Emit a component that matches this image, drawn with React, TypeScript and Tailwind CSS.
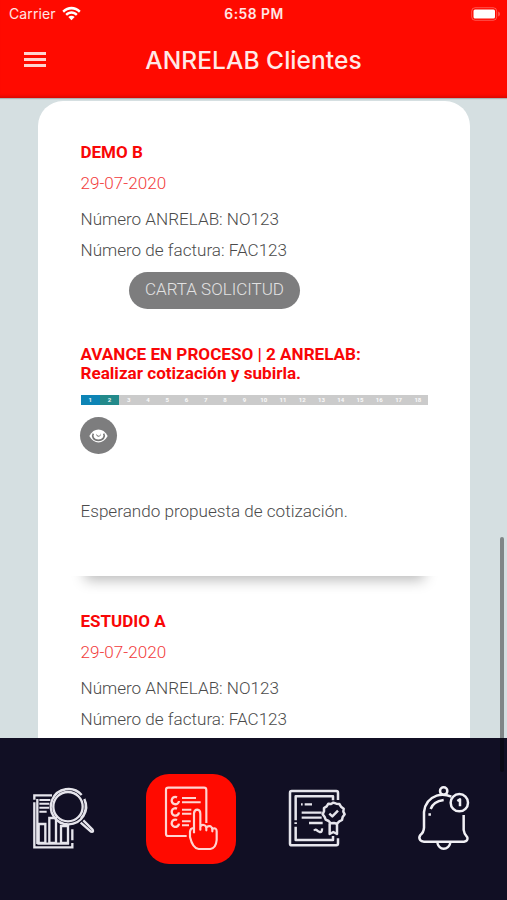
import type { ReactNode } from 'react';

const steps = Array.from({ length: 18 }, (_, i) => i + 1);

function StatusBar() {
  return (
    <div className="grid h-7 grid-cols-[1fr_auto_1fr] items-center pl-[9px] pr-[8px] leading-none text-white/90">
      <div className="flex items-center gap-[6px]">
        <span className="text-[14px] tracking-[0.1px]">Carrier</span>
        <svg width="19" height="15" viewBox="0 0 57 45" className="-mt-[2px]">
          <path d="M1 14C17-2 40-2 56 14L51 20C38 7 19 7 6 20Z" fill="white" />
          <path d="M10 24C21 13 36 13 47 24L42 29C34 21 23 21 15 29Z" fill="white" />
          <path d="M19 33C25 28 32 28 38 33L28.500 43Z" fill="white" />
        </svg>
      </div>
      <span className="pt-px text-center text-[13.800px] font-semibold tracking-[0.500px]">6:58 PM</span>
      <svg className="-mr-[2px] -mt-[1px] justify-self-end" width="30" height="14" viewBox="0 0 30 14">
        <rect x="0.700" y="0.700" width="25" height="12.600" rx="3.500" fill="none" stroke="white" strokeOpacity="0.300" />
        <rect x="2.500" y="2.500" width="21.500" height="9" rx="1.500" fill="white" />
        <path d="M27.300 4.500c2 .7 2 4.300 0 5z" fill="white" fillOpacity="0.400" />
      </svg>
    </div>
  );
}

function Header() {
  return (
    <header className="relative z-10 h-[98px] shrink-0 bg-[#ff0a00] font-['Inter',sans-serif] shadow-[inset_0_-4px_3px_-2px_rgba(120,0,0,0.25),0_1px_1px_rgba(0,0,0,0.2)]">
      <StatusBar />
      <div className="grid h-[63px] grid-cols-[70px_1fr_70px] items-center">
        <div className="ml-6 flex w-[22px] flex-col gap-[3.500px]">
          <span className="h-[2.500px] bg-[#ffd4d0]" />
          <span className="h-[2.500px] bg-[#ffd4d0]" />
          <span className="h-[2.500px] bg-[#ffd4d0]" />
        </div>
        <h1 className="whitespace-nowrap pt-px text-center text-[24.500px] font-medium leading-none tracking-[0.050px] text-[#ffe9e7]">ANRELAB Clientes</h1>
      </div>
    </header>
  );
}

function Record({ name }: { name: string }) {
  return (
    <div className="text-[17.100px] font-light text-[#4b4b4b]">
      <h2 className="-mt-px text-[17px] font-bold leading-[20px] text-[#f90606]">{name}</h2>
      <p className="mt-[11px] leading-[20px] text-[#f23b3b]">29-07-2020</p>
      <p className="mt-[16px] leading-[20px]">Número ANRELAB: NO123</p>
      <p className="mt-[11px] leading-[20px]">Número de factura: FAC123</p>
    </div>
  );
}

function Progress() {
  return (
    <div className="mt-[13px] grid h-[10px] w-[347px] grid-cols-[repeat(18,1fr)] bg-[#cbcbcb] text-center text-[6px] font-bold leading-[10px] text-white/90">
      {steps.map((n) => (
        <span key={n} className={n === 1 ? 'bg-[#0d84b5]' : n === 2 ? 'bg-[#238a8b]' : ''}>{n}</span>
      ))}
    </div>
  );
}

function Eye() {
  return (
    <svg width="19" height="16" viewBox="0 0 57 48">
      <path d="M1 24C14-2 43-2 56 24C43 50 14 50 1 24Z" fill="white" />
      <path d="M13 17C8 25 13 37 28 37C43 37 49 25 44 17" fill="none" stroke="#777" strokeWidth="5" />
      <path d="M22 17a7 7 0 1 0 13-1c0 5-2 7-5 7s-6-2-8-6z" fill="#777" />
    </svg>
  );
}

function Tab({ children }: { children: ReactNode }) {
  return <div className="flex h-[92px] shrink-0 items-center">{children}</div>;
}

function ReportIcon() {
  return (
    <svg width="90" height="100" viewBox="0 0 270 300" fill="none" stroke="#e6e5ec" strokeWidth="7">
      <path d="M96 76H43V89M43 97V232H157V219M157 211V178M52 87V222" />
      <path d="M58 90H91M58 101H88M58 113H87M58 125H80" strokeWidth="6" />
      <path d="M56 219V162H76V219ZM88 219V144H108V219ZM123 219V168H144V219ZM52 221H147" strokeWidth="7" />
      <circle cx="144" cy="110" r="44" strokeWidth="7" />
      <path d="M185 75A53 53 0 1 0 193 87A53 53 0 0 1 183 145" />
      <path d="M190 151L218 179Q222 187 213 185L182 158" strokeWidth="7" />
    </svg>
  );
}

function TasksIcon() {
  return (
    <svg className="shrink-0" width="105" height="105" viewBox="0 0 315 315" fill="none" stroke="#ffd4d1" strokeWidth="6.500" strokeLinejoin="round">
      <path d="M140 213H84Q78 213 78 206V74Q78 68 85 68H192Q199 68 199 75V174" />
      <path d="M111 97A11 11 0 1 0 117 108M111 131A11 11 0 1 0 117 142M111 165A11 11 0 1 0 117 176" strokeWidth="7" />
      <path d="M126 99H168M126 112H182M126 134H154M126 146H154M126 169H152M126 181H147" strokeWidth="6" />
      <path d="M162 205V145Q163 134 172 134Q181 135 181 146V194V185Q184 179 191 180Q198 181 199 189V196V188Q204 181 212 184Q217 187 217 194V199V191Q230 187 230 199V225Q228 249 211 252H176Q158 250 150 216V200Q151 190 160 189" />
    </svg>
  );
}

function CertificateIcon() {
  return (
    <svg width="90" height="100" viewBox="0 0 270 300" fill="none" stroke="#e6e5ec" strokeWidth="7.500" strokeLinejoin="round">
      <path d="M189 90V68Q189 63 184 63H50Q45 63 45 69V221Q45 226 51 226H184Q189 226 189 220V205" />
      <path d="M174 91V79H62V151M62 157V162M62 170V210H174V198" />
      <path d="M78 103H83M89 103H111M80 128H140M80 143H140M102 159H143" strokeWidth="7" />
      <path d="M117 182Q122 175 128 183L134 186Q142 188 141 175" strokeWidth="7" />
      <path d="M175 98L184 101L193 102L198 110L206 116L205 125L209 133L203 141L201 150L193 154L186 161L177 159L167 160L161 153L152 149L149 141L143 133L147 124L147 114L155 109L160 101L168 102Z" />
      <path d="M163 131L172 139L189 122" />
      <path d="M164 160V192L175 186L186 192V160" />
    </svg>
  );
}

function BellIcon() {
  return (
    <svg width="80" height="100" viewBox="0 0 240 300" fill="none" stroke="#f1f0f5" strokeWidth="7.500" strokeLinejoin="round">
      <circle cx="116" cy="63" r="11" />
      <path d="M139 80Q116 70 95 77Q61 89 57 126V173Q56 188 46 195Q40 203 46 211Q49 215 57 215H177Q190 213 187 202Q177 192 176 180V135" />
      <path d="M97 219Q102 236 116 236Q131 236 136 219M77 117Q84 95 116 90M74 130V137" />
      <circle cx="163" cy="98" r="26" />
      <path d="M157 93L165 88V109" />
    </svg>
  );
}

export default function App() {
  return (
    <div className="relative flex h-[900px] w-[507px] flex-col overflow-hidden bg-[#d5dfe1] font-['Roboto',sans-serif]">
      <Header />
      <main className="h-[640px] shrink-0 overflow-hidden px-[38px] pt-[3px]">
        <article className="h-[690px] w-[432px] rounded-t-[25px] bg-white pl-[42.500px] pt-[42px]">
          <Record name="DEMO B" />
          <button className="ml-[48.500px] mt-[12px] flex h-[37px] w-[171px] items-center justify-center rounded-full bg-[#7d7d7e] pb-[2px] text-[17px] font-light text-[#e2e2e2]">CARTA SOLICITUD</button>
          <h3 className="mt-[36px] text-[17.100px] font-bold leading-[18.500px] text-[#f90606]">
            <span className="block">AVANCE EN PROCESO | 2 ANRELAB:</span>
            <span className="block">Realizar cotización y subirla.</span>
          </h3>
          <Progress />
          <button className="-ml-[0.500px] mt-[12px] flex size-[37px] items-center justify-center rounded-full bg-[#7d7d7e]"><Eye /></button>
          <p className="mt-[47px] text-[17.100px] font-light leading-[20px] text-[#4b4b4b]">Esperando propuesta de cotización.</p>
          <div className="-ml-5 mt-[55px] h-[36px] w-[390px] overflow-hidden">
            <div className="-mt-10 ml-5 h-10 w-[347px] shadow-[0_8px_14px_-4px_rgba(0,0,0,0.28)]" />
          </div>
          <Record name="ESTUDIO A" />
        </article>
      </main>
      <nav className="flex h-[162px] shrink-0 items-start bg-[#110f24] pl-5 pt-[36px]">
        <Tab><ReportIcon /></Tab>
        <div className="ml-[36px] flex size-[90px] shrink-0 items-center justify-center rounded-[23px] bg-[#ff0a00] pb-[3px] pl-[3px]"><TasksIcon /></div>
        <div className="ml-[39px]"><Tab><CertificateIcon /></Tab></div>
        <div className="ml-[40px]"><Tab><BellIcon /></Tab></div>
      </nav>
      <div className="absolute right-[3.500px] top-[537px] z-20 h-[235px] w-[4px] rounded-full bg-black/40" />
    </div>
  );
}
